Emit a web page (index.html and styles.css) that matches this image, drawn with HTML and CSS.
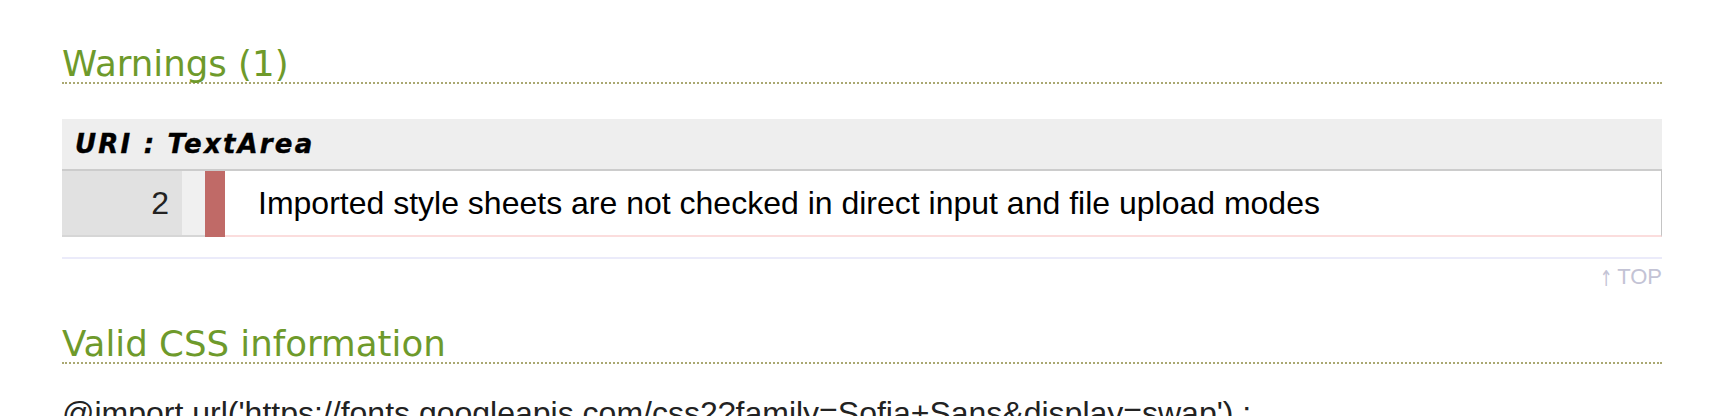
FILE: index.html
```
<!DOCTYPE html>
<html lang="en">
<head>
<meta charset="utf-8">
<title>W3C CSS Validator results</title>
<link rel="stylesheet" href="styles.css">
</head>
<body>
<div class="results">
  <div class="warnings">
    <h2 class="section-title">Warnings (1)</h2>
    <table class="report">
      <thead>
        <tr><th class="uri" colspan="4">URI : TextArea</th></tr>
      </thead>
      <tbody>
        <tr class="warning-row">
          <td class="linenumber">2</td>
          <td class="context"></td>
          <td class="level"></td>
          <td class="message">Imported style sheets are not checked in direct input and file upload modes</td>
        </tr>
      </tbody>
    </table>
    <div class="rule"></div>
    <p class="backtop"><a href="#top"><span class="arrow">↑</span> TOP</a></p>
  </div>
  <div class="valid">
    <h2 class="section-title">Valid CSS information</h2>
    <p class="code">@import url('https://fonts.googleapis.com/css2?family=Sofia+Sans&amp;display=swap') ;</p>
  </div>
</div>
</body>
</html>
```
FILE: styles.css
```
html, body {
  margin: 0;
  padding: 0;
  background: #ffffff;
}

body {
  font-family: "Liberation Sans", Arial, sans-serif;
  color: #000;
  overflow: hidden;
}

.results {
  padding: 46px 62px 0 62px;
}

.section-title {
  margin: 0;
  font-family: "DejaVu Sans", Verdana, sans-serif;
  font-weight: normal;
  font-size: 35.6px;
  line-height: 36px;
  color: #6e9a2b;
  border-bottom: 2px dotted #aaa872;
}

.report {
  margin-top: 35px;
  width: 100%;
  border-collapse: separate;
  border-spacing: 0;
}

.uri {
  height: 50px;
  padding: 0 0 0 13px;
  background: #eeeeee;
  text-align: left;
  font-family: "DejaVu Sans", Verdana, sans-serif;
  font-weight: bold;
  font-style: italic;
  font-size: 26px;
  letter-spacing: 2.2px;
  color: #000;
  vertical-align: middle;
  -webkit-text-stroke: 0.4px #000;
}

.warning-row td {
  height: 64px;
  padding: 0;
  border-top: 2px solid #cccccc;
  border-bottom: 2px solid #d6d6d6;
  vertical-align: middle;
  font-size: 32px;
}

.linenumber {
  width: 107px;
  padding-right: 13px !important;
  background: #e1e1e1;
  text-align: right;
  color: #222;
}

.context {
  width: 23px;
  background: #f0f0f0;
}

.level {
  width: 20px;
  background: #c06a67;
  border-bottom-color: #c06a67 !important;
}

.warning-row td.message {
  padding-left: 33px;
  background: #fff;
  border-right: 1px solid #c4c4c4;
  border-bottom-color: #fbdddd;
  color: #000;
}

.rule {
  margin-top: 20px;
  height: 2px;
  background: #ebebfa;
}

.backtop {
  margin: 6px 0 0 0;
  text-align: right;
  font-size: 22px;
  line-height: 24px;
}

.backtop a {
  color: #c3c3d5;
  text-decoration: none;
}

.arrow {
  display: inline-block;
  margin: 0 -4px;
  font-family: "DejaVu Sans", sans-serif;
  font-size: 22px;
  transform: scaleX(0.7) translateY(2px);
}

.valid {
  margin-top: 37px;
}

.code {
  margin: 31px 0 0 0;
  font-size: 32px;
  color: #222;
  white-space: nowrap;
}
```
